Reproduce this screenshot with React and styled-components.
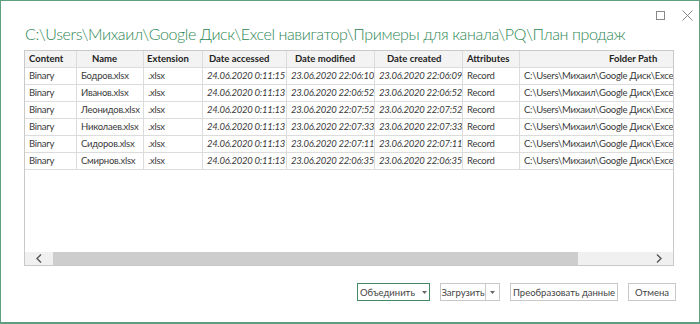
import React from "react";
import styled, { createGlobalStyle } from "styled-components";

const Global = createGlobalStyle`
  html, body { margin: 0; padding: 0; background: #fff; }
  * { box-sizing: border-box; }
`;

const columns = [
  { key: "content", title: "Content", width: 52, pad: 4 },
  { key: "name", title: "Name", width: 67, pad: 15 },
  { key: "ext", title: "Extension", width: 59, pad: 3 },
  { key: "accessed", title: "Date accessed", width: 84, pad: 6, italic: true },
  { key: "modified", title: "Date modified", width: 88, pad: 8, italic: true },
  { key: "created", title: "Date created", width: 88, pad: 12, italic: true },
  { key: "attr", title: "Attributes", width: 57, pad: 4 },
  { key: "path", title: "Folder Path", width: 240, pad: 89 },
];

const path = "C:\\Users\\Михаил\\Google Диск\\Excel навигатор\\Примеры для канала\\PQ\\";

const rows = [
  ["Бодров.xlsx", "24.06.2020 0:11:15", "23.06.2020 22:06:10", "23.06.2020 22:06:09"],
  ["Иванов.xlsx", "24.06.2020 0:11:13", "23.06.2020 22:06:52", "23.06.2020 22:06:52"],
  ["Леонидов.xlsx", "24.06.2020 0:11:13", "23.06.2020 22:07:52", "23.06.2020 22:07:52"],
  ["Николаев.xlsx", "24.06.2020 0:11:13", "23.06.2020 22:07:33", "23.06.2020 22:07:33"],
  ["Сидоров.xlsx", "24.06.2020 0:11:13", "23.06.2020 22:07:11", "23.06.2020 22:07:11"],
  ["Смирнов.xlsx", "24.06.2020 0:11:13", "23.06.2020 22:06:35", "23.06.2020 22:06:35"],
].map(([name, accessed, modified, created]) => ({
  content: "Binary",
  name,
  ext: ".xlsx",
  accessed,
  modified,
  created,
  attr: "Record",
  path,
}));

const gridCols = columns.map((c) => `${c.width}px`).join(" ");

const Window = styled.div`
  width: 700px;
  height: 324px;
  border: 1px solid #5e9f7f;
  border-bottom-width: 2px;
  display: flex;
  flex-direction: column;
  font-family: Lato, "Liberation Sans", sans-serif;
  overflow: hidden;
`;

const TopBar = styled.div`
  height: 20px;
  display: flex;
  justify-content: flex-end;
  align-items: flex-end;
  gap: 16px;
  padding-right: 6px;
`;

const WinIcon = styled.svg`
  width: 11px;
  height: 11px;
  display: block;
`;

const Title = styled.h1`
  margin: 0 0 0 24px;
  height: 29px;
  line-height: 25px;
  font-family: Lato, "Open Sans", sans-serif;
  font-weight: 300;
  font-size: 16px;
  letter-spacing: -0.4px;
  color: #2f8756;
  white-space: nowrap;
`;

const TableBox = styled.div`
  margin: 0 25px 0 23px;
  height: 216px;
  border: 1px solid #c9c9c9;
  display: flex;
  flex-direction: column;
`;

const TableArea = styled.div`
  flex: 1;
  overflow: hidden;
`;

const Row = styled.div`
  display: grid;
  grid-template-columns: ${gridCols};
  height: 17px;
  border-bottom: 1px solid #dcdcdc;
  background: ${(p) => (p.$head ? "#f3f3f3" : "#fff")};
  width: max-content;
`;

const Cell = styled.div`
  border-right: 1px solid #dcdcdc;
  padding-left: ${(p) => p.$pad}px;
  font-size: 9.5px;
  letter-spacing: ${(p) => (p.$head ? "0" : "-0.25px")};
  line-height: 16px;
  white-space: nowrap;
  overflow: hidden;
  color: ${(p) => (p.$head ? "#222" : "#3a3a3a")};
  font-weight: ${(p) => (p.$head ? 700 : 400)};
  font-style: ${(p) => (p.$italic ? "italic" : "normal")};
`;

const ScrollBar = styled.div`
  height: 13px;
  background: #f0f0f0;
  display: flex;
  align-items: center;
`;

const ScrollArrow = styled.div`
  width: 28px;
  height: 13px;
  display: flex;
  align-items: center;
  justify-content: center;
`;

const Track = styled.div`
  flex: 1;
  height: 13px;
  display: flex;
`;

const Thumb = styled.div`
  width: 525px;
  height: 13px;
  background: #cdcdcd;
`;

const Footer = styled.div`
  display: flex;
  justify-content: flex-end;
  gap: 10px;
  padding: 17px 23px 0 0;
`;

const Button = styled.div`
  width: ${(p) => p.$w}px;
  height: 18px;
  border: 1px solid ${(p) => (p.$primary ? "#3f8a60" : "#c8c8c8")};
  background: #fff;
  display: flex;
  align-items: stretch;
  font-size: 9.5px;
  color: #444;
`;

const ButtonLabel = styled.span`
  flex: 1;
  display: flex;
  align-items: center;
  justify-content: center;
  gap: 7px;
  white-space: nowrap;
`;

const Split = styled.span`
  width: 14px;
  border-left: 1px solid #c8c8c8;
  display: flex;
  align-items: center;
  justify-content: center;
`;

const Caret = () => (
  <svg width="5" height="3" viewBox="0 0 5 3">
    <path d="M0 0h5L2.5 3z" fill="#666" />
  </svg>
);

const Chevron = ({ dir }) => (
  <svg width="6" height="9" viewBox="0 0 6 9">
    <path
      d={dir === "left" ? "M5 0.5L1 4.5l4 4" : "M1 0.5l4 4-4 4"}
      fill="none"
      stroke="#555"
      strokeWidth="1.4"
    />
  </svg>
);

export default function App() {
  return (
    <>
      <Global />
      <Window>
        <TopBar>
          <WinIcon viewBox="0 0 11 11">
            <rect x="1.5" y="1.5" width="8" height="8" fill="none" stroke="#888" />
          </WinIcon>
          <WinIcon viewBox="0 0 11 11">
            <path d="M0.5 0.5l10 10M10.5 0.5l-10 10" stroke="#888" strokeWidth="1" />
          </WinIcon>
        </TopBar>
        <Title>{path}План продаж</Title>
        <TableBox>
          <TableArea>
            <Row $head>
              {columns.map((c) => (
                <Cell key={c.key} $head $pad={c.pad}>
                  {c.title}
                </Cell>
              ))}
            </Row>
            {rows.map((r, i) => (
              <Row key={i}>
                {columns.map((c) => (
                  <Cell key={c.key} $pad={4} $italic={c.italic}>
                    {r[c.key]}
                  </Cell>
                ))}
              </Row>
            ))}
          </TableArea>
          <ScrollBar>
            <ScrollArrow>
              <Chevron dir="left" />
            </ScrollArrow>
            <Track>
              <Thumb />
            </Track>
            <ScrollArrow>
              <Chevron dir="right" />
            </ScrollArrow>
          </ScrollBar>
        </TableBox>
        <Footer>
          <Button $primary $w={73}>
            <ButtonLabel>
              Объединить
              <Caret />
            </ButtonLabel>
          </Button>
          <Button $w={60}>
            <ButtonLabel>Загрузить</ButtonLabel>
            <Split>
              <Caret />
            </Split>
          </Button>
          <Button $w={108}>
            <ButtonLabel>Преобразовать данные</ButtonLabel>
          </Button>
          <Button $w={48}>
            <ButtonLabel>Отмена</ButtonLabel>
          </Button>
        </Footer>
      </Window>
    </>
  );
}
